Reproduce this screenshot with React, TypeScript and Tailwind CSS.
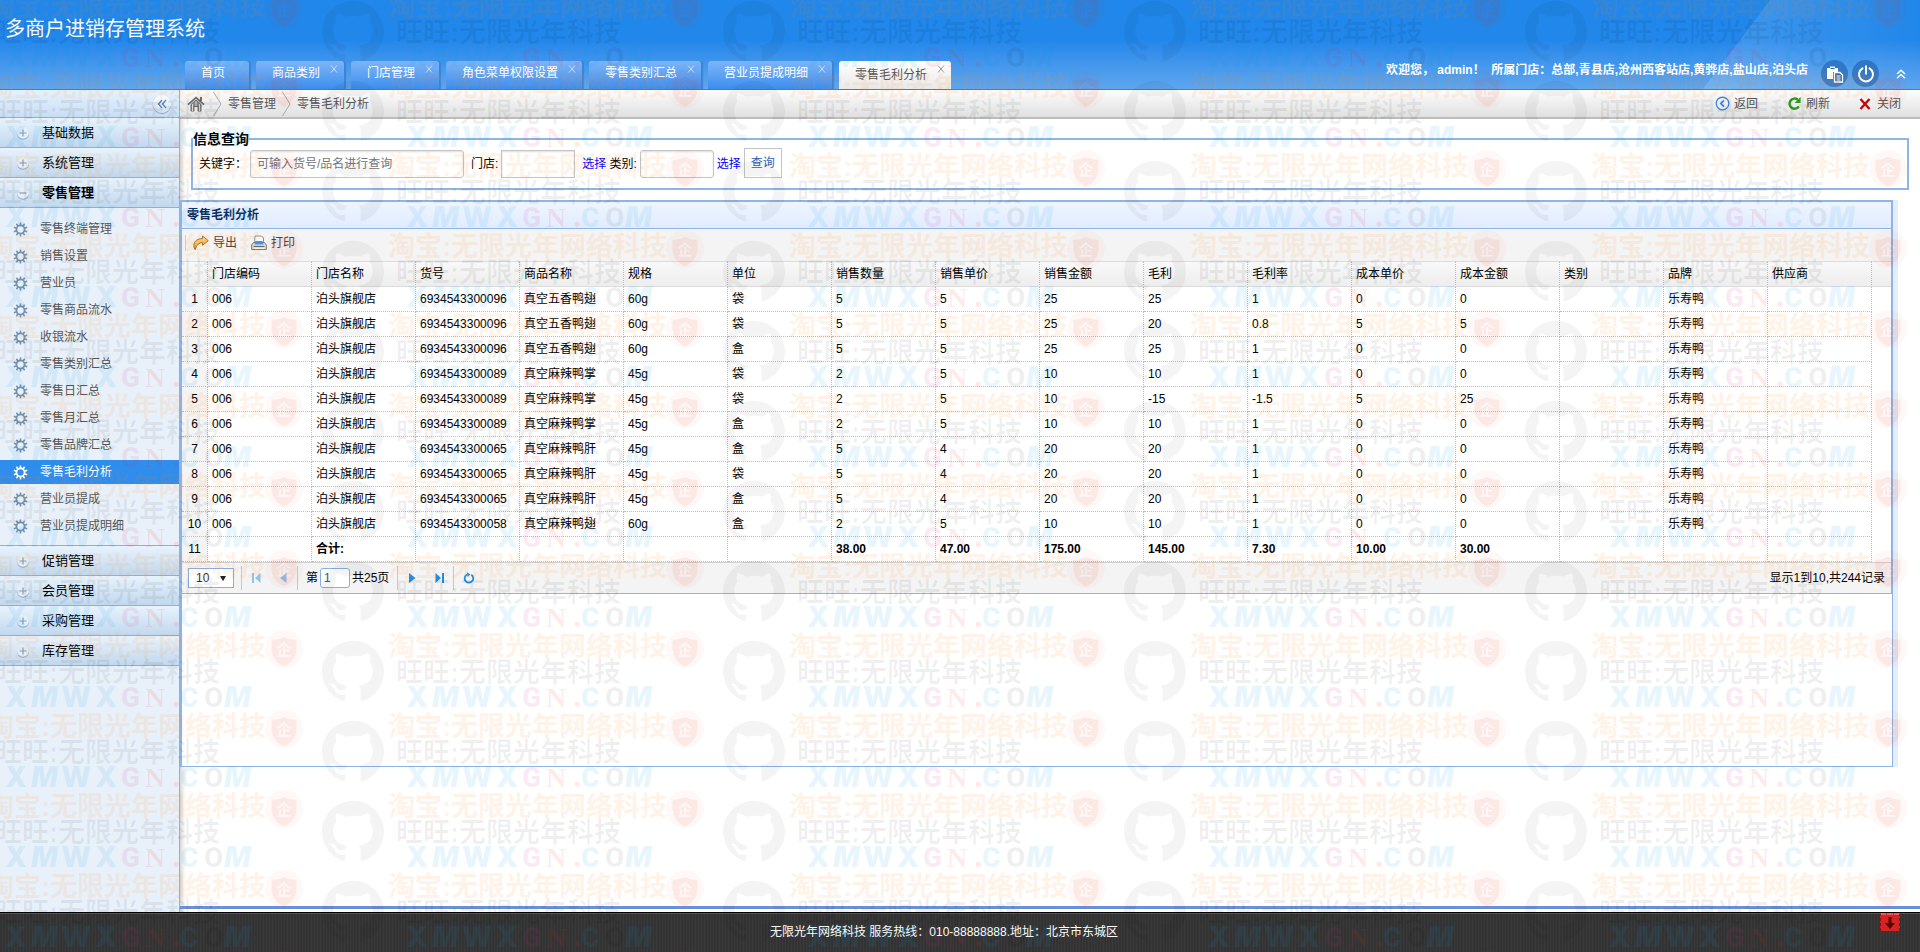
import { useState } from "react";

const tabs = ["首页", "商品类别", "门店管理", "角色菜单权限设置", "零售类别汇总", "营业员提成明细", "零售毛利分析"];

const retailMenu = [
  "零售终端管理",
  "销售设置",
  "营业员",
  "零售商品流水",
  "收银流水",
  "零售类别汇总",
  "零售日汇总",
  "零售月汇总",
  "零售品牌汇总",
  "零售毛利分析",
  "营业员提成",
  "营业员提成明细",
];

const columns = [
  "门店编码", "门店名称", "货号", "商品名称", "规格", "单位", "销售数量", "销售单价",
  "销售金额", "毛利", "毛利率", "成本单价", "成本金额", "类别", "品牌", "供应商",
];

const shop = "泊头旗舰店";
const brand = "乐寿鸭";

const rows = [
  ["006", shop, "6934543300096", "真空五香鸭翅", "60g", "袋", "5", "5", "25", "25", "1", "0", "0", "", brand, ""],
  ["006", shop, "6934543300096", "真空五香鸭翅", "60g", "袋", "5", "5", "25", "20", "0.8", "5", "5", "", brand, ""],
  ["006", shop, "6934543300096", "真空五香鸭翅", "60g", "盒", "5", "5", "25", "25", "1", "0", "0", "", brand, ""],
  ["006", shop, "6934543300089", "真空麻辣鸭掌", "45g", "袋", "2", "5", "10", "10", "1", "0", "0", "", brand, ""],
  ["006", shop, "6934543300089", "真空麻辣鸭掌", "45g", "袋", "2", "5", "10", "-15", "-1.5", "5", "25", "", brand, ""],
  ["006", shop, "6934543300089", "真空麻辣鸭掌", "45g", "盒", "2", "5", "10", "10", "1", "0", "0", "", brand, ""],
  ["006", shop, "6934543300065", "真空麻辣鸭肝", "45g", "盒", "5", "4", "20", "20", "1", "0", "0", "", brand, ""],
  ["006", shop, "6934543300065", "真空麻辣鸭肝", "45g", "袋", "5", "4", "20", "20", "1", "0", "0", "", brand, ""],
  ["006", shop, "6934543300065", "真空麻辣鸭肝", "45g", "盒", "5", "4", "20", "20", "1", "0", "0", "", brand, ""],
  ["006", shop, "6934543300058", "真空麻辣鸭翅", "60g", "盒", "2", "5", "10", "10", "1", "0", "0", "", brand, ""],
];

const totals = ["", "合计:", "", "", "", "", "38.00", "47.00", "175.00", "145.00", "7.30", "10.00", "30.00", "", "", ""];

function GearIcon() {
  return (
    <svg viewBox="0 0 16 16" className="size-[15px] shrink-0" fill="none" stroke="currentColor">
      <circle cx="8" cy="8" r="4.300" strokeWidth="1.900" />
      {Array.from({ length: 10 }, (_, i) => (
        <path key={i} d="M8 3.500V.5" strokeWidth="1.700" transform={`rotate(${i * 36} 8 8)`} />
      ))}
    </svg>
  );
}

function HomeIcon() {
  return (
    <svg viewBox="0 0 18 16" className="h-4 w-[18px]" fill="none" stroke="#6b6b6b">
      <path d="M1 8.600 9 1.600l8 7" strokeWidth="1.800" />
      <path d="M14 1v4" strokeWidth="2" />
      <path d="M4 8.500 9 4l5 4.500V15h-3v-4.500H7V15H4z" fill="#8a8a8a" strokeWidth="1" />
      <path d="M5.500 8v7M12.500 8v7M9 5v5" stroke="#d9d9d9" strokeWidth="1" />
    </svg>
  );
}

function ExportIcon() {
  return (
    <svg viewBox="0 0 16 16" className="size-4">
      <defs>
        <linearGradient id="arrow" x1="0" y1="0" x2="0" y2="1">
          <stop offset="0" stopColor="#ffe08a" />
          <stop offset="1" stopColor="#f29a1c" />
        </linearGradient>
      </defs>
      <path
        d="M9.500 1 15.300 5.700 9.500 10.300V7.700C6 7.600 3.600 9.800 2.200 14.800 1.500 13.900.8 12.300.8 10.600.8 6.400 4.300 3.600 9.500 3.600z"
        fill="url(#arrow)" stroke="#8f6a2c" strokeWidth=".9" strokeLinejoin="round"
      />
    </svg>
  );
}

function PrintIcon() {
  return (
    <svg viewBox="0 0 16 16" className="size-4">
      <path d="M4 1h6.500L12.500 3v5H3.500z" fill="#fff" stroke="#7f8790" strokeWidth=".9" />
      <path d="M2.500 7.500h11l1.800 2.500v4.500H.7V10z" fill="#e3e3e3" stroke="#777" strokeWidth="1" strokeLinejoin="round" />
      <path d="M4.500 6h7l1 3.500h-9z" fill="#2f9bf5" />
      <path d="M2.500 11.500h11" stroke="#666" strokeWidth="1.200" />
      <path d="M3 13.200h10" stroke="#fff" strokeWidth="1" />
    </svg>
  );
}

function BackIcon() {
  return (
    <svg viewBox="0 0 16 16" className="size-[15px]" fill="none" stroke="#3c86dc">
      <circle cx="8" cy="8" r="6.700" strokeWidth="1.400" />
      <path d="M9.600 4.600 6.200 8l3.400 3.400" strokeWidth="1.800" />
    </svg>
  );
}

function RefreshIcon() {
  return (
    <svg viewBox="0 0 16 16" className="size-[15px]" fill="none">
      <path d="M12.600 11.200A5.400 5.400 0 1 1 11.600 4" stroke="#2f9a1c" strokeWidth="2.600" />
      <path d="M14.500 1v6.500H8z" fill="#2f9a1c" />
    </svg>
  );
}

function CloseIcon() {
  return (
    <svg viewBox="0 0 12 12" className="size-3" fill="none" stroke="#c40808" strokeWidth="2.400">
      <path d="M1.500 1 10.500 11M10.500 1 1.500 11" />
    </svg>
  );
}

function MenuDot({ open }: { open?: boolean }) {
  return (
    <svg viewBox="0 0 14 14" className="size-[14px] shrink-0">
      <circle cx="7" cy="7.700" r="6" fill="#8ea9c7" />
      <circle cx="7" cy="6.700" r="6" fill="#e6eef6" />
      <path d={open ? "M3.500 7h7" : "M3.500 7h7M7 3.500v7"} stroke="#7f9fc4" strokeWidth="1.200" fill="none" />
    </svg>
  );
}

function MenuHeader({ label, open }: { label: string; open?: boolean }) {
  return (
    <button
      type="button"
      aria-expanded={!!open}
      className={`flex h-[30px] w-full items-center gap-3 border-b border-[#8fb0d4] bg-gradient-to-b from-[#e8f3fd] to-[#c1d8ee] pl-4 text-[13px] text-black ${open ? "font-bold" : ""}`}
    >
      <MenuDot open={open} />
      {label}
    </button>
  );
}

function Sidebar() {
  return (
    <aside className="flex w-[180px] shrink-0 flex-col border-r border-[#8fb0dc] bg-[#e8f1fa]">
      <div className="flex h-7 items-center justify-end border-b border-[#8fb0d4] bg-gradient-to-b from-[#e6f2fd] to-[#c9def4] pr-2">
        <button
          type="button"
          aria-label="收起菜单"
          className="flex size-[18px] items-center justify-center rounded-full bg-gradient-to-b from-white to-[#cfdfee] text-[#4b7fb8] shadow-[0_1px_1px_#7f9cbc]"
        >
          <svg viewBox="0 0 10 10" className="size-[10px]" fill="none" stroke="currentColor" strokeWidth="1.200">
            <path d="M5 1 1.500 5 5 9M9 1 5.500 5 9 9" />
          </svg>
        </button>
      </div>
      <MenuHeader label="基础数据" />
      <MenuHeader label="系统管理" />
      <MenuHeader label="零售管理" open />
      <nav className="flex flex-col gap-[3px] border-b border-[#8fb0d4] pt-[9px] pb-[7px]">
        {retailMenu.map((item) => {
          const active = item === "零售毛利分析";
          return (
            <a
              key={item}
              href="#"
              className={`flex h-6 items-center gap-3 pl-[13px] ${active ? "bg-[#2f8ded] text-white" : "text-[#555]"}`}
            >
              <span className={active ? "text-white" : "text-[#7391ad]"}>
                <GearIcon />
              </span>
              {item}
            </a>
          );
        })}
      </nav>
      <MenuHeader label="促销管理" />
      <MenuHeader label="会员管理" />
      <MenuHeader label="采购管理" />
      <MenuHeader label="库存管理" />
    </aside>
  );
}

function Header() {
  return (
    <header className="relative flex h-[90px] items-end border-b border-[#3f7fc4] bg-gradient-to-b from-[#2187ea] from-45% to-[#5ea6ee]">
      {/* Light beam on the right */}
      <div className="absolute inset-y-0 right-0 w-[217px] bg-gradient-to-r from-white/15 to-transparent [clip-path:polygon(31%_0,100%_0,100%_100%,0_100%)]" />
      <div className="flex w-[185px] shrink-0 self-start pt-[14px] pl-[5px]">
        <h1 className="text-[20px] leading-[30px] whitespace-nowrap text-white">多商户进销存管理系统</h1>
      </div>
      <div className="flex gap-[7px]">
        {tabs.map((tab, i) => {
          const active = i === tabs.length - 1;
          return (
            <div
              key={tab}
              className={`flex h-7 items-start rounded-t-[3px] pl-4 ${
                active
                  ? "bg-gradient-to-b from-white to-[#e9e9e9] text-[#555]"
                  : "bg-gradient-to-b from-[#7db4f6] to-[#3a8eef] text-white shadow-[2px_0_1px_#3b83d6]"
              }`}
            >
              <button type="button" className={active ? "pt-[6px]" : "pt-1"}>{tab}</button>
              <span className="flex w-6 justify-end pt-1 pr-[6px]">
                {i > 0 && (
                  <button type="button" aria-label={`关闭${tab}`} className={active ? "text-[#999]" : "text-[#c8e0fb]"}>
                    <svg viewBox="0 0 8 8" className="size-2" fill="none" stroke="currentColor">
                      <path d="M1 .5 7 7.500M7 .5 1 7.500" />
                    </svg>
                  </button>
                )}
              </span>
            </div>
          );
        })}
      </div>
      <div className="relative ml-auto flex items-center pr-[14px] pb-[2px]">
        <p className="pr-[13px] pb-2 font-bold whitespace-nowrap text-white">
          欢迎您，&nbsp;admin！&nbsp;&nbsp;所属门店：总部,青县店,沧州西客站店,黄骅店,盐山店,泊头店
        </p>
        <button type="button" aria-label="日志" className="mr-1 flex size-[27px] items-center justify-center rounded-full bg-[#1f5fa8]/60">
          <svg viewBox="0 0 18 18" className="size-[18px]" fill="none">
            <path d="M1 3h3V1.500h5V3h3v4H7v7H1z" fill="#fff" />
            <path d="M4.500 3.500h4" stroke="#2f6db3" strokeWidth="1.200" />
            <path d="M8.500 7.500h5.500l2.500 2.500v7h-8z" fill="#2f6db3" stroke="#fff" strokeWidth="1.300" />
            <path d="M10.500 11h4M10.500 13h4M10.500 15h4" stroke="#fff" />
          </svg>
        </button>
        <button type="button" aria-label="退出" className="mr-[17px] flex size-[27px] items-center justify-center rounded-full bg-[#1f5fa8]/60">
          <svg viewBox="0 0 18 18" className="size-[18px]" fill="none" stroke="#fff" strokeWidth="2" strokeLinecap="round">
            <path d="M5.500 3.400a7 7 0 1 0 7 0M9 1.200v7.600" />
          </svg>
        </button>
        <button type="button" aria-label="收起顶部" className="text-white">
          <svg viewBox="0 0 10 10" className="size-[10px]" fill="none" stroke="currentColor" strokeWidth="1.400">
            <path d="M1 5 5 1.200 9 5M1 9.200 5 5.400 9 9.200" />
          </svg>
        </button>
      </div>
    </header>
  );
}

function Chevron() {
  return (
    <svg viewBox="0 0 9 24" className="h-6 w-[9px]" fill="none" stroke="#a9a9a9">
      <path d="M.5 0 8 12 .5 24" />
    </svg>
  );
}

function Breadcrumb() {
  return (
    <div className="flex h-[29px] items-center border-b-2 border-[#bdbdbd] bg-gradient-to-b from-[#fdfdfd] to-[#e0e0e0] pr-[19px] pl-[7px] text-[#555]">
      <div className="flex items-center gap-[6px]">
        <a href="#" aria-label="首页" className="mr-[2px]"><HomeIcon /></a>
        <Chevron />
        <span>零售管理</span>
        <Chevron />
        <span>零售毛利分析</span>
      </div>
      <div className="ml-auto flex gap-[29px]">
        <button type="button" className="flex items-center gap-1"><BackIcon />返回</button>
        <button type="button" className="flex items-center gap-1"><RefreshIcon />刷新</button>
        <button type="button" className="flex items-center gap-[6px]"><CloseIcon />关闭</button>
      </div>
    </div>
  );
}

function SearchForm() {
  const box = "h-7 border border-[#c4c4c4] bg-white shadow-[inset_0_1px_2px_#ddd] outline-none";
  return (
    <fieldset className="mx-[11px] mt-[10px] border-2 border-[#8fb4e8] pb-[10px]">
      <legend className="text-[14px] leading-5 font-bold text-black">信息查询</legend>
      <div className="flex h-[29px] items-end gap-[3px] px-[6px] leading-7">
        <label htmlFor="keyword" className="whitespace-nowrap">关键字：</label>
        <input id="keyword" placeholder="可输入货号/品名进行查询" className={`${box} mr-1 w-[214px] rounded-[3px] px-[6px] placeholder:text-[#757575]`} />
        <label htmlFor="store">门店:</label>
        <input id="store" className={`${box} mr-1 w-[74px] px-1`} />
        <a href="#" className="text-[#0000ff]">选择</a>
        <label htmlFor="category">类别:</label>
        <input id="category" className={`${box} w-[74px] rounded-[3px] px-1`} />
        <a href="#" className="text-[#0000ff]">选择</a>
        <button type="button" className="h-[30px] w-[38px] border border-[#c4c4c4] bg-white text-[#2f5fb8]">查询</button>
      </div>
    </fieldset>
  );
}

function GridTable() {
  const th = "h-[26px] border-y border-[#dcdcdc] px-1 text-left font-normal whitespace-nowrap";
  const td = "h-[25px] border-r border-b border-dotted border-[#bdbdbd] px-1 whitespace-nowrap";
  return (
    <table className="w-full table-fixed border-separate border-spacing-0 text-black">
      <colgroup>
        <col className="w-[26px]" />
        {columns.map((c) => (
          <col key={c} className="w-[104px]" />
        ))}
        <col />
      </colgroup>
      <thead>
        <tr className="bg-gradient-to-b from-[#f9f9f9] to-[#ededed]">
          <th className={`${th} border-r border-r-[#bdbdbd] [border-right-style:dotted]`} />
          {columns.map((c) => (
            <th key={c} className={`${th} border-r border-r-[#bdbdbd] [border-right-style:dotted]`}>{c}</th>
          ))}
          <th className={th} />
        </tr>
      </thead>
      <tbody>
        {[...rows, totals].map((row, i) => (
          <tr key={i} className={i === rows.length ? "font-bold" : ""}>
            <td className={`${td} bg-[#f4f4f4] text-center font-normal`}>{i + 1}</td>
            {row.map((cell, j) => (
              <td key={j} className={td}>{cell}</td>
            ))}
            <td />
          </tr>
        ))}
      </tbody>
    </table>
  );
}

function Pager() {
  const [page, setPage] = useState("1");
  const rule = <span className="h-6 w-px bg-[#c8c8c8]" />;
  return (
    <div className="flex h-[31px] items-center border-t border-[#d4d4d4] bg-[#f4f4f4] px-[6px] text-black">
      <div className="relative mr-[7px]">
        <select aria-label="每页条数" className="h-5 w-[46px] appearance-none border border-[#86aee6] bg-white pl-[7px] text-[#333] outline-none">
          <option>10</option>
          <option>20</option>
        </select>
        <svg viewBox="0 0 8 7" className="pointer-events-none absolute top-[7px] right-2 h-[7px] w-[6px]"><path d="M0 0h8L4 7z" fill="#222" /></svg>
      </div>
      {rule}
      <div className="flex w-[55px] items-center justify-around text-[#8ec3f0]">
        <button type="button" aria-label="第一页">
          <svg viewBox="0 0 10 10" className="size-[10px]" fill="currentColor"><path d="M1 0h2v10H1zM9.500 0v10L4 5z" /></svg>
        </button>
        <button type="button" aria-label="上一页">
          <svg viewBox="0 0 10 10" className="size-[10px]" fill="currentColor"><path d="M8.500 0v10L2 5z" /></svg>
        </button>
      </div>
      {rule}
      <label htmlFor="page" className="mr-[2px] ml-2">第</label>
      <input
        id="page"
        value={page}
        onChange={(e) => setPage(e.target.value)}
        className="mr-[2px] h-5 w-[30px] rounded-[3px] border border-[#86aee6] bg-white px-[3px] text-[#555] outline-none"
      />
      <span className="mr-2">共25页</span>
      {rule}
      <div className="flex w-[55px] items-center justify-around text-[#1b8fea]">
        <button type="button" aria-label="下一页">
          <svg viewBox="0 0 10 10" className="size-[10px]" fill="currentColor"><path d="M2 0v10L8.500 5z" /></svg>
        </button>
        <button type="button" aria-label="最后一页">
          <svg viewBox="0 0 10 10" className="size-[10px]" fill="currentColor"><path d="M7 0h2v10H7zM.5 0v10L6 5z" /></svg>
        </button>
      </div>
      {rule}
      <button type="button" aria-label="刷新列表" className="ml-[9px] text-[#1b8fea]">
        <svg viewBox="0 0 12 12" className="size-3" fill="none" stroke="currentColor" strokeWidth="1.800">
          <path d="M4 2.500a4.300 4.300 0 1 0 4.300.2" />
          <path d="M3.800.2 7.400 2.300 4.600 5z" fill="currentColor" stroke="none" />
        </svg>
      </button>
      <span className="ml-auto">显示1到10,共244记录</span>
    </div>
  );
}

function ReportPanel() {
  return (
    <section className="mt-[10px] mr-[22px] border-r-[5px] border-[#e4edf8]">
      <div className="border-2 border-b border-[#8fb4e8]">
        <h2 className="h-[27px] border-b border-[#8fb4e8] bg-gradient-to-b from-[#eff5ff] to-[#e0ecff] pl-[5px] leading-[26px] font-bold text-[#0e2d5f]">
          零售毛利分析
        </h2>
        <div className="flex h-8 items-center bg-[#f4f4f4] pb-1 pl-[3px] text-[#444]">
          <span className="mr-[7px] h-4 w-px bg-[#ccc]" />
          <button type="button" className="mr-[14px] flex items-center gap-1"><ExportIcon />导出</button>
          <button type="button" className="flex items-center gap-1"><PrintIcon />打印</button>
        </div>
        <GridTable />
        <Pager />
      </div>
      <div className="h-[173px] border-r border-b border-l-2 border-[#8fb4e8] bg-white" />
    </section>
  );
}

function Octocat() {
  return (
    <svg viewBox="0 0 24 24" className="mt-[10px] ml-[19px] size-[62px]" fill="#000" fillOpacity=".045">
      <path d="M12 .297c-6.630 0-12 5.373-12 12 0 5.303 3.438 9.800 8.205 11.385.6.113.820-.258.820-.577 0-.285-.010-1.040-.015-2.040-3.338.724-4.042-1.610-4.042-1.610C4.422 18.070 3.633 17.700 3.633 17.700c-1.087-.744.084-.729.084-.729 1.205.084 1.838 1.236 1.838 1.236 1.070 1.835 2.809 1.305 3.495.998.108-.776.417-1.305.760-1.605-2.665-.300-5.466-1.332-5.466-5.930 0-1.310.465-2.380 1.235-3.220-.135-.303-.540-1.523.105-3.176 0 0 1.005-.322 3.300 1.230.960-.267 1.980-.399 3-.405 1.020.006 2.040.138 3 .405 2.280-1.552 3.285-1.230 3.285-1.230.645 1.653.240 2.873.120 3.176.765.840 1.230 1.910 1.230 3.220 0 4.610-2.805 5.625-5.475 5.920.420.360.810 1.096.810 2.220 0 1.606-.015 2.896-.015 3.286 0 .315.210.690.825.570C20.565 22.092 24 17.592 24 12.297c0-6.627-5.373-12-12-12" />
    </svg>
  );
}

function Watermark() {
  return (
    <div aria-hidden="true" className="pointer-events-none absolute inset-0 z-50 overflow-hidden select-none">
      <svg className="absolute size-0">
        <mask id="badge-cut">
          <rect width="38" height="38" fill="#fff" />
          <text x="19" y="25" textAnchor="middle" fontSize="15" fontWeight="700" fill="#000" fontFamily="Noto Sans CJK SC">企</text>
        </mask>
      </svg>
      <div className="-mt-[10px] -ml-[13px] grid auto-rows-[80px] grid-cols-[repeat(5,401px)]">
        {Array.from({ length: 65 }, (_, i) => (
          <div key={i} className="flex items-start">
            <div className="w-[278px] pt-1 text-[27px] font-bold whitespace-nowrap">
              <p className="h-[27px] leading-[27px] text-[#ff7f00]/9">淘宝:无限光年网络科技</p>
              <p className="h-6 pl-2 leading-6 text-black/6">旺旺:无限光年科技</p>
              <p className="flex h-[25px] pl-[18px] font-['Inter'] text-[28px] leading-[25px] font-black text-[#0099e5]/9">
                <span className="w-[26px]">X</span>
                <span className="w-[30px] italic">M</span>
                <span className="w-[34px]">W</span>
                <span className="w-[26px]">X</span>
                <span className="w-6 font-['Roboto'] text-[#d8247f]/9">G</span>
                <span className="w-[26px] font-['Liberation_Serif'] text-[#ff1a1a]/10">N</span>
                <span className="w-[9px] text-[#ff1a1a]/10">.</span>
                <span className="w-6 font-['Roboto']">C</span>
                <span className="w-5 font-['Roboto'] text-black/6">O</span>
                <span className="w-[30px] italic">M</span>
              </p>
            </div>
            <svg viewBox="0 0 38 38" className="size-[38px]">
              <circle cx="19" cy="19" r="19" fill="#f04a28" fillOpacity=".04" />
              <path
                d="M19 7c4 2 8 3 12.500 3v9c0 8-5.500 14-12.500 17.500C12 33 6.500 27 6.500 19v-9C11 10 15 9 19 7z"
                fill="#e8331c" fillOpacity=".08" mask="url(#badge-cut)"
              />
            </svg>
            <Octocat />
          </div>
        ))}
      </div>
    </div>
  );
}

function Footer() {
  return (
    <footer className="flex h-10 border-t border-black bg-[#333] bg-[repeating-linear-gradient(90deg,transparent_0_2px,#ffffff08_2px_3px)] pl-2 shadow-[inset_0_1px_#555]">
      <p className="flex-1 text-center leading-[38px] text-white">
        无限光年网络科技 服务热线：010-88888888.地址：北京市东城区
      </p>
      <button type="button" aria-label="收起底部" className="mr-5 flex h-[18px] w-5 items-center justify-center border-x border-t-2 border-dashed border-x-[#8f1010] border-t-[#ff5050] bg-[#d42323]">
        <svg viewBox="0 0 10 12" className="h-3 w-[10px]" fill="#5c0000"><path d="M3.500 0h3v6H10L5 12 0 6h3.500z" /></svg>
      </button>
    </footer>
  );
}

export default function App() {
  return (
    <div className="relative flex min-h-screen flex-col bg-white font-['Liberation_Sans','Noto_Sans_CJK_SC',sans-serif] text-[12px] leading-4 text-black">
      <Header />
      <div className="flex flex-1">
        <Sidebar />
        <main className="flex min-w-0 flex-1 flex-col shadow-[inset_6px_0_5px_-4px_rgba(0,0,0,0.2)]">
          <Breadcrumb />
          <SearchForm />
          <ReportPanel />
          <div className="mt-auto mb-[3px] h-[3px] bg-[#6b8fd9]" />
        </main>
      </div>
      <Footer />
      <Watermark />
    </div>
  );
}
